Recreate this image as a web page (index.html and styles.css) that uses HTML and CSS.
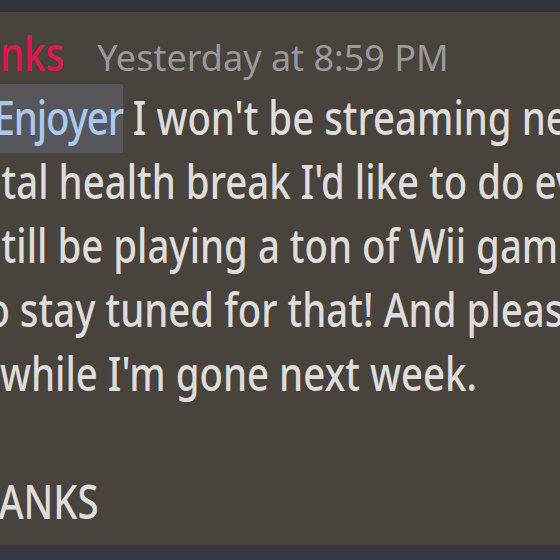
FILE: index.html
```html
<!DOCTYPE html>
<html lang="en">
  <head>
    <meta charset="UTF-8" />
    <meta name="viewport" content="width=device-width, initial-scale=1.0" />
    <title>Message</title>
    <link rel="stylesheet" href="styles.css">
  </head>
  <body>
    <div class="chat">
      <div class="top-bar"></div>
      <div class="message">
        <div class="header">
          <span class="username">nks</span>
          <span class="timestamp">Yesterday at 8:59 PM</span>
        </div>
        <div class="content">
          <div class="line"><span class="mention cut-e">Enjoyer</span> I won't be streaming next week</div>
          <div class="line indent-t">tal health break I'd like to do every so often</div>
          <div class="line indent-t">till be playing a ton of Wii games</div>
          <div class="line cut-o">o stay tuned for that! And please</div>
          <div class="line">while I'm gone next week.</div>
          <div class="line empty"></div>
          <div class="line cut-a">ANKS</div>
        </div>
      </div>
      <div class="bottom-bar"></div>
    </div>
  </body>
</html>
```

FILE: styles.css
```css
* {
  padding: 0;
  margin: 0;
  box-sizing: border-box;
}
body {
  background-color: #48433d;
  font-family: "Noto Sans", "Open Sans", sans-serif;
}
.chat {
  width: 560px;
  height: 560px;
  overflow: hidden;
  display: flex;
  flex-direction: column;
  background-color: #48433d;
}
.top-bar {
  height: 12px;
  flex-shrink: 0;
  background-color: #30343a;
}
.message {
  flex: 1;
  padding-top: 9px;
  overflow: hidden;
}
.header {
  display: flex;
  align-items: baseline;
  height: 64px;
  line-height: 64px;
  white-space: nowrap;
}
/* the capture is squeezed sideways, so the name and body are narrowed */
.username {
  display: inline-block;
  color: #e3164f;
  font-size: 48px;
  font-weight: 500;
  transform: scaleX(0.8);
  transform-origin: left;
  margin-right: 17px;
}
.timestamp {
  color: #9a9a9c;
  font-size: 36px;
}
.content {
  color: #dfdddb;
  font-size: 48px;
  font-weight: 500;
  line-height: 64px;
  width: 720px;
  transform: scaleX(0.8);
  transform-origin: left;
}
.line {
  white-space: nowrap;
  height: 64px;
}
.mention {
  color: #a9c8f0;
  background-color: #57575b;
  padding: 0 0 4px 2px;
  border-radius: 3px;
  letter-spacing: -1.4px;
}
.cut-e {
  margin-left: -10px;
}
.indent-t {
  padding-left: 2px;
}
.cut-o {
  margin-left: -17px;
}
.cut-a {
  margin-left: -2px;
}
.bottom-bar {
  height: 15px;
  flex-shrink: 0;
  background-color: #353842;
}
```
